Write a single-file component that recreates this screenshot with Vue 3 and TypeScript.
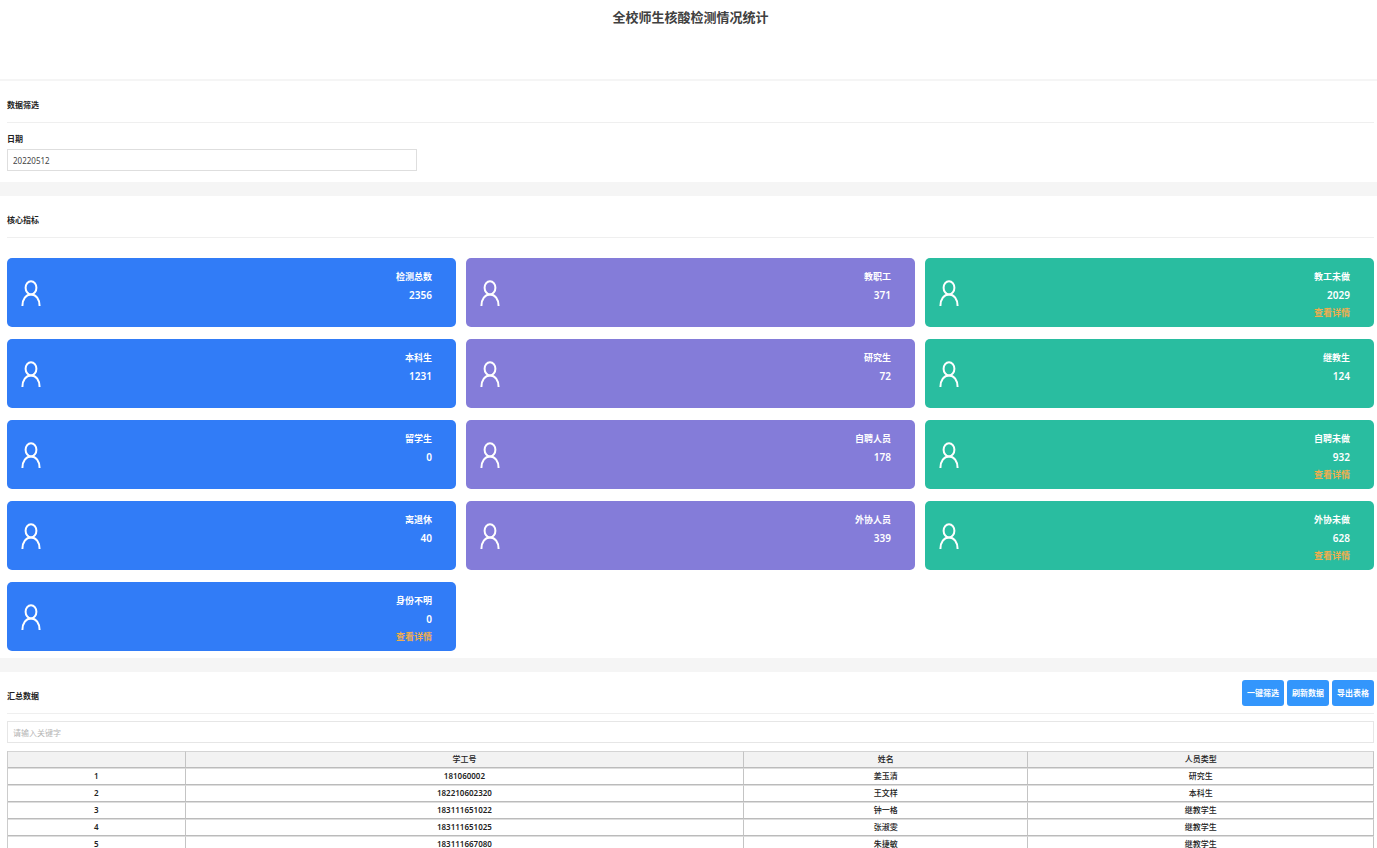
<script setup lang="ts">
import { ref, computed } from 'vue'

interface Metric {
  label: string
  value: number
  tone: 'blue' | 'purple' | 'green'
  detail?: boolean
}

interface Person {
  id: string
  name: string
  type: string
}

const date = ref('20220512')
const keyword = ref('')

const metrics: Metric[] = [
  { label: '检测总数', value: 2356, tone: 'blue' },
  { label: '教职工', value: 371, tone: 'purple' },
  { label: '教工未做', value: 2029, tone: 'green', detail: true },
  { label: '本科生', value: 1231, tone: 'blue' },
  { label: '研究生', value: 72, tone: 'purple' },
  { label: '继教生', value: 124, tone: 'green' },
  { label: '留学生', value: 0, tone: 'blue' },
  { label: '自聘人员', value: 178, tone: 'purple' },
  { label: '自聘未做', value: 932, tone: 'green', detail: true },
  { label: '离退休', value: 40, tone: 'blue' },
  { label: '外协人员', value: 339, tone: 'purple' },
  { label: '外协未做', value: 628, tone: 'green', detail: true },
  { label: '身份不明', value: 0, tone: 'blue', detail: true },
]

const people: Person[] = [
  { id: '181060002', name: '姜玉清', type: '研究生' },
  { id: '182210602320', name: '王文样', type: '本科生' },
  { id: '183111651022', name: '钟一格', type: '继教学生' },
  { id: '183111651025', name: '张淑雯', type: '继教学生' },
  { id: '183111667080', name: '朱捷敏', type: '继教学生' },
]

const rows = computed(() =>
  people.filter((p) => (p.id + p.name + p.type).includes(keyword.value.trim())),
)
</script>

<template>
  <main class="page">
    <header class="page-head">
      <h1>全校师生核酸检测情况统计</h1>
    </header>

    <section class="panel filter">
      <h2 class="panel-title">数据筛选</h2>
      <label class="field-label" for="date">日期</label>
      <input id="date" v-model="date" class="field date" type="text" />
    </section>

    <section class="panel metrics">
      <h2 class="panel-title">核心指标</h2>
      <div class="cards">
        <article v-for="m in metrics" :key="m.label" class="card" :class="m.tone">
          <svg class="person" viewBox="0 0 20 26" aria-hidden="true">
            <ellipse cx="10" cy="7.8" rx="5.4" ry="6.6" />
            <path d="M1.4 26C1.4 19 5 14.6 10 14.6S18.6 19 18.6 26" />
          </svg>
          <div class="figures">
            <span class="label">{{ m.label }}</span>
            <strong class="value">{{ m.value }}</strong>
            <a v-if="m.detail" class="detail" href="#">查看详情</a>
          </div>
        </article>
      </div>
    </section>

    <section class="panel summary">
      <div class="panel-title summary-head">
        <h2>汇总数据</h2>
        <div class="actions">
          <button type="button">一键筛选</button>
          <button type="button">刷新数据</button>
          <button type="button">导出表格</button>
        </div>
      </div>
      <input
        v-model="keyword"
        class="field search"
        type="text"
        placeholder="请输入关键字"
        aria-label="请输入关键字"
      />
      <table>
        <colgroup>
          <col class="c-index" />
          <col class="c-id" />
          <col class="c-name" />
          <col class="c-type" />
        </colgroup>
        <thead>
          <tr>
            <th></th>
            <th scope="col">学工号</th>
            <th scope="col">姓名</th>
            <th scope="col">人员类型</th>
          </tr>
        </thead>
        <tbody>
          <tr v-for="(p, i) in rows" :key="p.id">
            <td class="num">{{ i + 1 }}</td>
            <td class="num">{{ p.id }}</td>
            <td>{{ p.name }}</td>
            <td>{{ p.type }}</td>
          </tr>
        </tbody>
      </table>
    </section>
  </main>
</template>

<style>
html {
  scrollbar-width: none;
}
body {
  margin: 0;
  background: #fff;
}
</style>

<style scoped>
.page,
.page * {
  box-sizing: border-box;
}
.page {
  font-family: 'Noto Sans', 'Noto Sans CJK SC', sans-serif;
  font-size: 8px;
  line-height: 16px;
  color: #222;
}
h1,
h2 {
  margin: 0;
  font-size: inherit;
}
.page-head {
  height: 81px;
  padding: 5px 0 0 4px;
  border-bottom: 2px solid #f5f5f5;
  text-align: center;
}
.page-head h1 {
  font-size: 13px;
  line-height: 24px;
  color: #404040;
}
.panel {
  padding: 0 3px 0 7px;
}
.panel + .panel {
  border-top: 14px solid #f5f5f5;
}
.panel-title {
  height: 42px;
  padding-top: 16px;
  border-bottom: 1px solid #efefef;
  font-weight: 600;
}
.filter {
  padding-bottom: 11px;
}
.field-label {
  display: block;
  padding: 8px 0 2px;
  font-weight: 600;
}
.field {
  display: block;
  height: 22px;
  padding: 0 5px;
  border: 1px solid #dedede;
  border-radius: 0;
  background: #fff;
  color: #444;
  font: inherit;
  outline: none;
}
.field::placeholder {
  color: #b4b4b4;
  opacity: 1;
}
.date {
  width: 30%;
}
.cards {
  display: grid;
  grid-template-columns: repeat(3, 1fr);
  gap: 12px 10px;
  padding: 20px 0 7px;
}
.card {
  display: flex;
  align-items: center;
  justify-content: space-between;
  height: 69px;
  padding: 0 24px 0 14px;
  border-radius: 5px;
  color: #fff;
}
.blue {
  background: #317cf7;
}
.purple {
  background: #847cd9;
}
.green {
  background: #29bda0;
}
.person {
  width: 20px;
  height: 26px;
  fill: none;
  stroke: #fff;
  stroke-width: 2;
}
.figures {
  display: flex;
  flex-direction: column;
  align-items: flex-end;
  align-self: flex-start;
  padding-top: 10px;
  font-size: 9px;
  font-weight: 600;
  line-height: 18px;
}
.value {
  font-size: 10px;
  font-weight: 600;
}
.detail {
  color: #f0ad4e;
  text-decoration: none;
}
.summary-head {
  display: flex;
  justify-content: space-between;
  padding-top: 0;
}
.summary-head h2 {
  padding-top: 16px;
}
.actions {
  display: flex;
  gap: 3px;
  padding-top: 8px;
}
.actions button {
  width: 42px;
  height: 26px;
  padding: 0;
  border: 0;
  border-radius: 3px;
  background: #3396fc;
  color: #fff;
  font: inherit;
}
.search {
  width: 100%;
  margin: 7px 0 8px;
  border-color: #e6e6e6;
}
table {
  width: 100%;
  table-layout: fixed;
  border-spacing: 0;
  border-left: 1px solid #ccc;
  text-align: center;
}
.c-index {
  width: 13%;
}
.c-id {
  width: 40.9%;
}
.c-name {
  width: 20.8%;
}
th,
td {
  height: 17px;
  padding: 0 0 2px;
  border-right: 1px solid #c4c4c4;
  border-bottom: 1px solid #bbb;
  line-height: 13px;
  font-weight: 500;
}
th {
  border-top: 1px solid #d4d4d4;
  background: #f2f2f2;
}
td {
  border-top: 1px solid #dedede;
}
.num {
  font-weight: 600;
}
</style>
